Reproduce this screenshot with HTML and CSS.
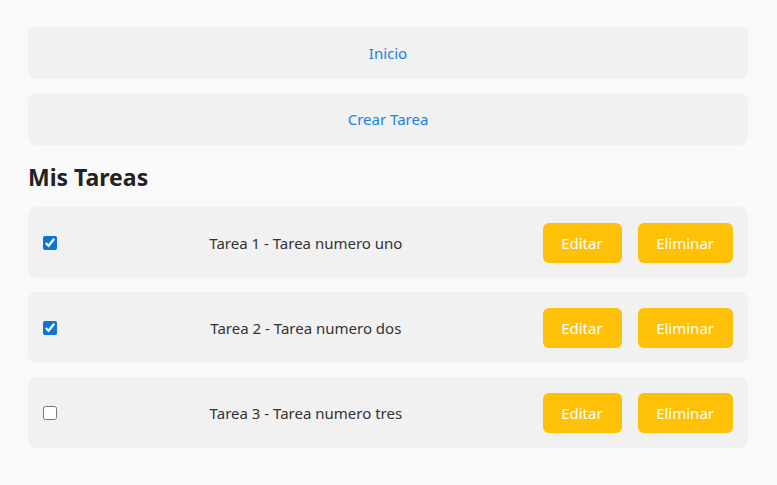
FILE: index.html
```html
<!DOCTYPE html>
<html lang="es">
<head>
<meta charset="utf-8">
<link rel="stylesheet" href="styles.css">
</head>
<body>
<div class="container">
  <nav class="nav">
    <a class="nav-item" href="#">Inicio</a>
    <a class="nav-item" href="#">Crear Tarea</a>
  </nav>
  <h2 class="title">Mis Tareas</h2>
  <ul class="tasks">
    <li class="task">
      <input type="checkbox" checked>
      <span class="task-text">Tarea 1 - Tarea numero uno</span>
      <button class="btn">Editar</button>
      <button class="btn">Eliminar</button>
    </li>
    <li class="task">
      <input type="checkbox" checked>
      <span class="task-text">Tarea 2 - Tarea numero dos</span>
      <button class="btn">Editar</button>
      <button class="btn">Eliminar</button>
    </li>
    <li class="task">
      <input type="checkbox">
      <span class="task-text">Tarea 3 - Tarea numero tres</span>
      <button class="btn">Editar</button>
      <button class="btn">Eliminar</button>
    </li>
  </ul>
</div>
</body>
</html>
```
FILE: styles.css
```css
html, body {
  margin: 0;
  padding: 0;
  background: #f9f9f9;
  font-family: "Noto Sans", "Open Sans", sans-serif;
  color: #333;
}
.container {
  width: 720px;
  margin: 0 0 0 28px;
  padding-top: 27px;
}
.nav {
  display: flex;
  flex-direction: column;
  gap: 14px;
}
.nav-item {
  display: flex;
  align-items: center;
  justify-content: center;
  height: 52px;
  background: #f1f1f1;
  border-radius: 8px;
  color: #1a7fe8;
  text-decoration: none;
  font-size: 15px;
}
.title {
  margin: 18px 0 16px;
  font-size: 23px;
  font-weight: 700;
  color: #222;
  line-height: 28px;
}
.tasks {
  list-style: none;
  margin: 0;
  padding: 0;
  display: flex;
  flex-direction: column;
  gap: 14px;
}
.task {
  display: flex;
  align-items: center;
  height: 71px;
  box-sizing: border-box;
  padding: 0 15px;
  background: #f1f1f1;
  border-radius: 8px;
}
.task input {
  margin: 0;
  width: 14px;
  height: 14px;
  accent-color: #0a74da;
}
.task-text {
  flex: 1;
  text-align: center;
  padding-left: 12px;
  font-size: 15px;
}
.btn {
  margin-left: 16px;
  height: 40px;
  padding: 0 19px 0 18.5px;
  border: none;
  border-radius: 6px;
  background: #ffc107;
  color: #fff;
  font-family: inherit;
  font-size: 15px;
}
.task-text + .btn { margin-left: 0; }
```
